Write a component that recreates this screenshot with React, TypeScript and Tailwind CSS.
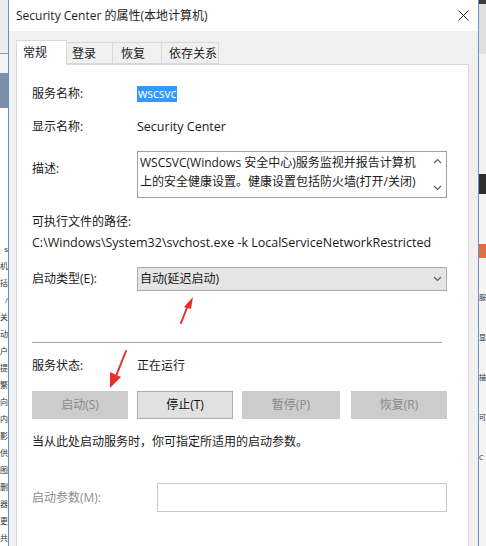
import React from 'react';

const font = 'font-["Open_Sans","Noto_Sans_CJK_SC",sans-serif]';

const Chevron = ({ dir }: { dir: 'up' | 'down' }) => (
    <svg width="9" height="6" viewBox="0 0 9 6" className="text-[#606060]">
        <path d={dir === 'up' ? 'M1 5 L4.5 1.5 L8 5' : 'M1 1 L4.5 4.5 L8 1'} fill="none" stroke="currentColor" strokeWidth="1.2" />
    </svg>
);

const Button = ({ label, enabled }: { label: string; enabled?: boolean }) => (
    <div
        className={
            enabled
                ? 'h-[28px] flex items-center justify-center bg-[#e1e1e1] border border-[#adadad] text-[#111] text-[12px]'
                : 'h-[28px] flex items-center justify-center bg-[#cccccc] border border-[#cccccc] text-[#8a8a8a] text-[12px]'
        }
    >
        {label}
    </div>
);

const sideChars = ['s', '机', '括', '/', '关', '动', '户', '提', '繁', '向', '内', '影', '供', '图', '删', '器', '更', '共'];
const rightChars = ['服', '显', '描', '可', 'C'];

export default function App() {
    return (
        <div className={`relative w-[486px] h-[546px] overflow-hidden flex bg-[#dcdcdc] text-[12px] text-[#1a1a1a] ${font}`}>
            {/* window behind, left edge */}
            <div className="w-[8px] flex flex-col bg-white overflow-hidden">
                <div className="h-[56px] bg-[#ececec] border-b border-[#9a9a9a]" />
                <div className="h-[20px] bg-[#f4f4f4]" />
                <div className="h-[36px] bg-[#7b8fab]" />
                <div className="h-[138px] bg-white" />
                <div className="flex flex-col items-end leading-[17px] text-[8px] text-[#333]">
                    {sideChars.map((c, i) => (
                        <span key={i}>{c}</span>
                    ))}
                </div>
            </div>

            {/* dialog */}
            <div className="w-[471px] h-[546px] flex flex-col bg-[#f0f0f0] border-l border-r border-[#6d8fc4]">
                <div className="h-[31px] shrink-0 bg-white flex items-center justify-between pl-[7px] pr-[9px]">
                    <span className="text-[12px] text-[#222]">Security Center 的属性(本地计算机)</span>
                    <svg width="11" height="11" viewBox="0 0 11 11">
                        <path d="M0.5 0.5 L10.5 10.5 M10.5 0.5 L0.5 10.5" stroke="#222" strokeWidth="1" />
                    </svg>
                </div>

                <div className="flex-1 flex flex-col pl-[7px] pr-[9px] pt-[9px]">
                    {/* tabs */}
                    <div className="flex items-end h-[24px] relative z-10">
                        <div className="w-[51px] h-[25px] -mb-[1px] bg-white border border-[#d9d9d9] border-b-0 pl-[6px] pt-[3px]">常规</div>
                        <div className="w-[46px] h-[22px] bg-[#f0f0f0] border border-[#d9d9d9] border-l-0 pl-[5px] pt-[2px]">登录</div>
                        <div className="w-[49px] h-[22px] bg-[#f0f0f0] border border-[#d9d9d9] border-l-0 pl-[8px] pt-[2px]">恢复</div>
                        <div className="w-[57px] h-[22px] bg-[#f0f0f0] border border-[#d9d9d9] border-l-0 pl-[7px] pt-[2px]">依存关系</div>
                    </div>

                    {/* panel */}
                    <div className="flex-1 bg-white border border-[#d9d9d9] border-b-0 pl-[15px] pr-[21px] flex flex-col">
                        <div className="mt-[19px] h-[20px] flex items-center">
                            <span className="w-[105px]">服务名称:</span>
                            <span className="bg-[#3399ff] text-white px-[1px] h-[16px] flex items-center">wscsvc</span>
                        </div>

                        <div className="mt-[13px] h-[20px] flex items-center">
                            <span className="w-[105px]">显示名称:</span>
                            <span className="text-[12.5px]">Security Center</span>
                        </div>

                        <div className="mt-[14px] flex">
                            <span className="w-[105px] mt-[9px]">描述:</span>
                            <div className="w-[310px] h-[47px] border border-[#a0a0a0] flex">
                                <div className="flex-1 pl-[2px] pt-[1px] leading-[19px] whitespace-nowrap overflow-hidden">
                                    WSCSVC(Windows 安全中心)服务监视并报告计算机
                                    <br />
                                    上的安全健康设置。健康设置包括防火墙(打开/关闭)
                                </div>
                                <div className="w-[17px] flex flex-col items-center justify-between py-[6px]">
                                    <Chevron dir="up" />
                                    <Chevron dir="down" />
                                </div>
                            </div>
                        </div>

                        <div className="mt-[16px] h-[16px] flex items-center">可执行文件的路径:</div>
                        <div className="mt-[5px] h-[16px] flex items-center text-[12.5px]">C:\Windows\System32\svchost.exe -k LocalServiceNetworkRestricted</div>

                        <div className="mt-[16px] flex items-center">
                            <span className="w-[105px]">启动类型(E):</span>
                            <div className="w-[310px] h-[24px] bg-[#e5e5e5] border border-[#acacac] flex items-center justify-between pl-[2px] pr-[4px]">
                                <span>自动(延迟启动)</span>
                                <Chevron dir="down" />
                            </div>
                        </div>

                        <div className="mt-[51px] h-px bg-[#a0a0a0] w-[410px]" />

                        <div className="mt-[14px] h-[18px] flex items-center">
                            <span className="w-[105px]">服务状态:</span>
                            <span>正在运行</span>
                        </div>

                        <div className="mt-[16px] flex">
                            <div className="w-[96px]"><Button label="启动(S)" /></div>
                            <div className="w-[96px] ml-[9px]"><Button label="停止(T)" enabled /></div>
                            <div className="w-[98px] ml-[9px]"><Button label="暂停(P)" /></div>
                            <div className="w-[96px] ml-[11px]"><Button label="恢复(R)" /></div>
                        </div>

                        <div className="mt-[15px] h-[16px] flex items-center">当从此处启动服务时，你可指定所适用的启动参数。</div>

                        <div className="mt-[33px] flex items-center">
                            <span className="w-[125px] text-[#8d8d8d]">启动参数(M):</span>
                            <div className="w-[290px] h-[29px] border border-[#c8c8c8] bg-white" />
                        </div>
                    </div>
                </div>
            </div>

            {/* window behind, right edge */}
            <div className="w-[7px] flex flex-col bg-[#f4f4f4] overflow-hidden">
                <div className="h-[4px] bg-[#3a3a3a]" />
                <div className="h-[50px] bg-[#e0e0e0]" />
                <div className="h-[120px] bg-[#f2f2f2]" />
                <div className="h-[20px] bg-[#2f2f2f]" />
                <div className="h-[50px] bg-[#f4f4f4]" />
                <div className="h-[14px] bg-[#e07040]" />
                <div className="flex flex-col leading-[40px] text-[7px] text-[#333] mt-[20px]">
                    {rightChars.map((c, i) => (
                        <span key={i}>{c}</span>
                    ))}
                </div>
            </div>

            {/* red annotation arrows */}
            <svg className="absolute inset-0 pointer-events-none" width="486" height="546" viewBox="0 0 486 546">
                <path d="M181 323 L188 305" stroke="#e8302a" strokeWidth="2" strokeLinecap="round" />
                <path d="M193 297 L184 307 L191 309 Z" fill="#e8302a" />
                <path d="M126 351 L116 376" stroke="#e8302a" strokeWidth="2" strokeLinecap="round" />
                <path d="M110 388 L110 372 L121 377 Z" fill="#e8302a" />
            </svg>
        </div>
    );
}
